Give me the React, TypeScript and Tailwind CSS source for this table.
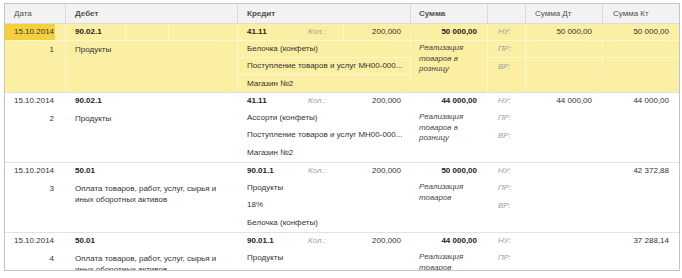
type Entry = {
  n: number;
  debet: string;
  debetText: string;
  kredit: string;
  kreditLines: string[];
  summa: string;
  content: string;
  dt: string;
  kt: string;
};

const entries: Entry[] = [
  {
    n: 1,
    debet: "90.02.1",
    debetText: "Продукты",
    kredit: "41.11",
    kreditLines: ["Белочка (конфеты)", "Поступление товаров и услуг МН00-000...", "Магазин №2"],
    summa: "50 000,00",
    content: "Реализация товаров в розницу",
    dt: "50 000,00",
    kt: "50 000,00",
  },
  {
    n: 2,
    debet: "90.02.1",
    debetText: "Продукты",
    kredit: "41.11",
    kreditLines: ["Ассорти (конфеты)", "Поступление товаров и услуг МН00-000...", "Магазин №2"],
    summa: "44 000,00",
    content: "Реализация товаров в розницу",
    dt: "44 000,00",
    kt: "44 000,00",
  },
  {
    n: 3,
    debet: "50.01",
    debetText: "Оплата товаров, работ, услуг, сырья и иных оборотных активов",
    kredit: "90.01.1",
    kreditLines: ["Продукты", "18%", "Белочка (конфеты)"],
    summa: "50 000,00",
    content: "Реализация товаров",
    dt: "",
    kt: "42 372,88",
  },
  {
    n: 4,
    debet: "50.01",
    debetText: "Оплата товаров, работ, услуг, сырья и иных оборотных активов",
    kredit: "90.01.1",
    kreditLines: ["Продукты"],
    summa: "44 000,00",
    content: "Реализация товаров",
    dt: "",
    kt: "37 288,14",
  },
];

const cols = "grid grid-cols-[61px_172px_173px_77px_38px_77px_76px]";

function Row({ e, selected, last }: { e: Entry; selected: boolean; last: boolean }) {
  // grid lines are only drawn inside the selected (yellow) row
  const line = selected ? "border-[#fdf6cf]" : "border-transparent";

  return (
    <div
      className={`${cols} shrink-0 border-b border-[#e2e2e2] ${
        selected ? "h-[69px] bg-[#fbefa4]" : "h-[70px] bg-white"
      }`}
    >
      {/* Дата */}
      <div className={`border-r ${line}`}>
        <div className={`h-[17px] border-b ${line}`}>
          <div
            className={`h-full w-[50px] flex items-center pl-[9px] ${
              selected ? "bg-[#f5d03e]" : ""
            }`}
          >
            15.10.2014
          </div>
        </div>
        <div className="h-[17px] w-[50px] flex items-center justify-end pr-[1px]">{e.n}</div>
      </div>

      {/* Дебет */}
      <div className={`border-r ${line}`}>
        <div className={`h-[17px] border-b ${line} grid grid-cols-[60px_43px_1fr]`}>
          <div className={`border-r ${line} flex items-center pl-[9px] font-bold text-[#222]`}>
            {e.debet}
          </div>
          <div className={`border-r ${line}`} />
          <div />
        </div>
        <div className="w-[162px] pl-[9px] pt-[3px] leading-[11px]">{e.debetText}</div>
      </div>

      {/* Кредит */}
      <div className={`border-r ${line}`}>
        <div className={`h-[17px] border-b ${line} grid grid-cols-[61px_45px_1fr]`}>
          <div className={`border-r ${line} flex items-center pl-[9px] font-bold text-[#222]`}>
            {e.kredit}
          </div>
          <div className={`border-r ${line} flex items-center pl-[9px] italic text-[#a0a0a0]`}>
            Кол.:
          </div>
          <div className="flex items-center justify-end pr-[9px]">200,000</div>
        </div>
        {e.kreditLines.map((t, i) => (
          <div
            key={i}
            className={`h-[17px] flex items-center pl-[9px] whitespace-nowrap ${
              i < 2 ? `border-b ${line}` : ""
            }`}
          >
            {t}
          </div>
        ))}
      </div>

      {/* Сумма */}
      <div className={`border-r ${line}`}>
        <div
          className={`h-[17px] border-b ${line} flex items-center justify-end pr-[10px] font-bold text-[#222]`}
        >
          {e.summa}
        </div>
        <div className="pl-[8px] pr-[6px] pt-[2px] leading-[10.5px] italic text-[#444]">
          {e.content}
        </div>
      </div>

      {/* НУ / ПР / ВР */}
      <div className={`border-r ${line} italic text-[#a0a0a0]`}>
        <div className={`h-[17px] border-b ${line} flex items-center pl-[10px]`}>НУ:</div>
        <div className={`h-[17px] border-b ${line} flex items-center pl-[10px]`}>ПР:</div>
        {!last && <div className="h-[17px] flex items-center pl-[10px]">ВР:</div>}
      </div>

      {/* Сумма Дт */}
      <div className={`border-r ${line}`}>
        <div className={`h-[17px] border-b ${line} flex items-center justify-end pr-[10px]`}>
          {e.dt}
        </div>
        <div className={`h-[17px] border-b ${line}`} />
      </div>

      {/* Сумма Кт */}
      <div>
        <div className={`h-[17px] border-b ${line} flex items-center justify-end pr-[10px]`}>
          {e.kt}
        </div>
        <div className={`h-[17px] border-b ${line}`} />
      </div>
    </div>
  );
}

export default function App() {
  return (
    <div className="w-[682px] h-[278px] bg-white overflow-hidden pt-[3px] pl-[4px] font-['Liberation_Sans',Arial,sans-serif] text-[8px] text-[#333]">
      <div className="w-[676px] h-[268px] border border-[#c4c4c4] overflow-hidden flex flex-col">
        <div className={`${cols} h-[20px] shrink-0 bg-[#f2f2f2] border-b border-[#dcdcdc] text-[#505050]`}>
          <div className="border-r border-[#d9d9d9] flex items-center pl-[9px]">Дата</div>
          <div className="border-r border-[#d9d9d9] flex items-center pl-[9px] font-bold">Дебет</div>
          <div className="border-r border-[#d9d9d9] flex items-center pl-[9px] font-bold">Кредит</div>
          <div className="border-r border-[#d9d9d9] flex items-center pl-[8px] font-bold">Сумма</div>
          <div className="border-r border-[#d9d9d9]" />
          <div className="border-r border-[#d9d9d9] flex items-center pl-[9px]">Сумма Дт</div>
          <div className="flex items-center pl-[10px]">Сумма Кт</div>
        </div>
        {entries.map((e, i) => (
          <Row key={e.n} e={e} selected={i === 0} last={i === entries.length - 1} />
        ))}
      </div>
    </div>
  );
}
